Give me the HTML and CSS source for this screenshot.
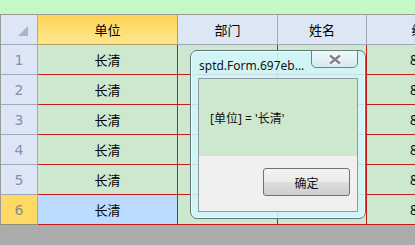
FILE: index.html
```html
<!DOCTYPE html>
<html lang="zh-CN">
<head>
    <meta charset="UTF-8">
    <title>Grid</title>
    <link rel="stylesheet" href="styles.css">
</head>
<body>
    <div class="topband"></div>
    <div class="grid">
        <div class="corner"><span class="tri"></span></div>
        <div class="colhead selected">单位</div>
        <div class="colhead">部门</div>
        <div class="colhead">姓名</div>
        <div class="colhead">编号</div>

        <div class="rowhead">1</div>
        <div class="cell">长清</div><div class="cell"></div><div class="cell"></div><div class="cell">8012</div>
        <div class="rowhead">2</div>
        <div class="cell">长清</div><div class="cell"></div><div class="cell"></div><div class="cell">8012</div>
        <div class="rowhead">3</div>
        <div class="cell">长清</div><div class="cell"></div><div class="cell"></div><div class="cell">8012</div>
        <div class="rowhead">4</div>
        <div class="cell">长清</div><div class="cell"></div><div class="cell"></div><div class="cell">8012</div>
        <div class="rowhead">5</div>
        <div class="cell">长清</div><div class="cell"></div><div class="cell"></div><div class="cell">8012</div>
        <div class="rowhead current">6</div>
        <div class="cell active">长清</div><div class="cell"></div><div class="cell"></div><div class="cell">8012</div>
    </div>
    <div class="bottomband"></div>

    <div class="dialog">
        <div class="titlebar">
            <span class="title">sptd.Form.697eb...</span>
            <div class="close">
                <svg width="16" height="11" viewBox="0 0 16 11">
                    <path d="M3 1.5 L13 9.5 M13 1.5 L3 9.5" stroke="#fdfdfd" stroke-width="5" fill="none"/>
                    <path d="M3 1.5 L13 9.5 M13 1.5 L3 9.5" stroke="#7d838a" stroke-width="2.4" fill="none"/>
                </svg>
            </div>
        </div>
        <div class="client">
            <div class="msg">[单位] = '长清'</div>
            <div class="foot">
                <button class="ok">确定</button>
            </div>
        </div>
    </div>
</body>
</html>
```

FILE: styles.css
```css
body {
    margin: 0;
    width: 415px;
    height: 245px;
    overflow: hidden;
    position: relative;
    background: #ababab;
    font-family: "Noto Sans", "Noto Sans CJK SC", sans-serif;
    font-size: 13px;
    color: #000;
}

.topband {
    height: 14px;
    background: #c6f7c6;
}

.grid {
    display: grid;
    grid-template-columns: 37px 140px 100px 89px 116px;
    grid-auto-rows: 30px;
    width: 482px;
    border-top: 1px solid #9a9a9a;
    border-left: 1px solid #9a9a9a;
    box-sizing: border-box;
}

.grid > div {
    box-sizing: border-box;
    display: flex;
    align-items: center;
    justify-content: center;
    overflow: hidden;
    white-space: nowrap;
}

.corner {
    background: #dce6f4;
    border-right: 1px solid #9eaabb;
    border-bottom: 1px solid #9eaabb;
    position: relative;
}
.tri {
    position: absolute;
    right: 9px;
    bottom: 8px;
    width: 0;
    height: 0;
    border-left: 10px solid transparent;
    border-bottom: 10px solid #a7b6c9;
}

.colhead {
    background: #dce6f4;
    border-right: 1px solid #9eaabb;
    border-bottom: 1px solid #9eaabb;
    font-family: "Noto Sans CJK SC", sans-serif;
    font-size: 13px;
}
.colhead.selected {
    background: linear-gradient(#ffd257, #ffe88e);
    border-right-color: #b89a5a;
    border-bottom-color: #b89a5a;
}

.rowhead {
    background: #dce6f4;
    border-right: 1px solid #9eaabb;
    border-bottom: 1px solid #9eaabb;
    color: #7d93b2;
    font-family: "DejaVu Sans", sans-serif;
    font-size: 14px;
}
.rowhead.current {
    background: #ffd966;
    color: #8a8a8a;
    border-bottom-color: #8d8d7a;
}

.cell {
    background: #cde8cf;
    border-right: 1px solid #c41b1b;
    border-bottom: 1px solid #c41b1b;
    font-family: "Noto Sans CJK SC", sans-serif;
    font-size: 13px;
}
.cell.active {
    background: #bcdcff;
}

.dialog {
    position: absolute;
    left: 190px;
    top: 50px;
    width: 176px;
    height: 169px;
    box-sizing: border-box;
    border: 1px solid #63737e;
    border-radius: 7px;
    background: rgba(210, 246, 250, 0.88);
    box-shadow: inset 0 0 0 1px rgba(255, 255, 255, 0.7);
    padding: 0 7px 6px 7px;
    display: flex;
    flex-direction: column;
}

.titlebar {
    height: 27px;
    display: flex;
    justify-content: space-between;
    align-items: flex-start;
}
.title {
    padding: 6px 0 0 1px;
    font-family: "Noto Sans", sans-serif;
    font-size: 12px;
    color: #111;
}
.close {
    width: 47px;
    height: 18px;
    margin-top: -1px;
    box-sizing: border-box;
    border: 1px solid #6f808b;
    border-radius: 0 0 5px 5px;
    background: linear-gradient(#eef8fa, #d6eaef);
    display: flex;
    align-items: center;
    justify-content: center;
}

.client {
    flex: 1;
    border: 1px solid #8c9ba4;
    display: flex;
    flex-direction: column;
}
.msg {
    height: 77px;
    background: #cde8cf;
    display: flex;
    align-items: center;
    padding-left: 11px;
    font-family: "Noto Sans", "Noto Sans CJK SC", sans-serif;
    font-size: 12px;
    color: #111;
}
.foot {
    flex: 1;
    background: #f0f0f0;
    display: flex;
    justify-content: flex-end;
    align-items: flex-start;
    padding: 12px 7px 0 0;
}
.ok {
    width: 87px;
    height: 28px;
    border: 1px solid #707070;
    border-radius: 3px;
    background: linear-gradient(#f3f3f3 0%, #ebebeb 48%, #dddddd 52%, #cfcfcf 100%);
    font-family: "Noto Sans CJK SC", sans-serif;
    font-size: 12px;
    color: #111;
    padding: 0;
}
```
